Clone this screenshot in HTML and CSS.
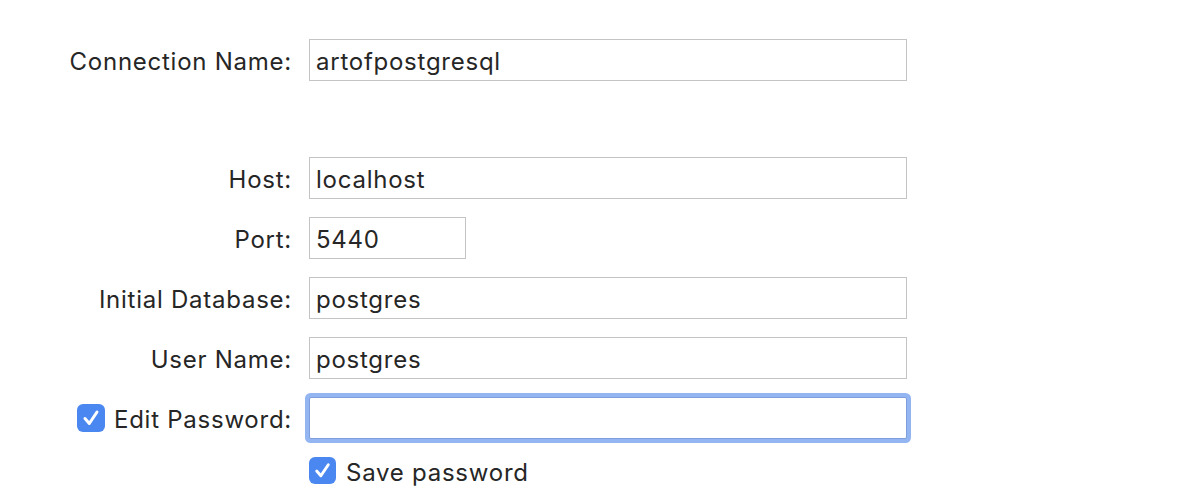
FILE: index.html
```html
<!DOCTYPE html>
<html>
<head>
<meta charset="utf-8">
<link rel="stylesheet" href="styles.css">
</head>
<body>
<div class="form">
  <div class="label">Connection Name:</div>
  <div class="field"><div class="input">artofpostgresql</div></div>
  <div class="spacer"></div>
  <div class="label">Host:</div>
  <div class="field"><div class="input">localhost</div></div>
  <div class="label">Port:</div>
  <div class="field"><div class="input port">5440</div></div>
  <div class="label">Initial Database:</div>
  <div class="field"><div class="input">postgres</div></div>
  <div class="label">User Name:</div>
  <div class="field"><div class="input">postgres</div></div>
  <div class="label check-label">
    <span class="checkbox"><svg viewBox="0 0 28 28" width="28" height="28"><path d="M8 14.5 L12.3 19.5 L20 8" fill="none" stroke="#fff" stroke-width="3" stroke-linecap="round" stroke-linejoin="round"/></svg></span>
    <span>Edit Password:</span>
  </div>
  <div class="field"><div class="input focused"></div></div>
  <div class="empty"></div>
  <div class="save">
    <span class="checkbox small"><svg viewBox="0 0 28 28" width="27" height="27"><path d="M8 14.5 L12.3 19.5 L20 8" fill="none" stroke="#fff" stroke-width="3" stroke-linecap="round" stroke-linejoin="round"/></svg></span>
    <span>Save password</span>
  </div>
</div>
</body>
</html>
```
FILE: styles.css
```css
html, body {
  margin: 0;
  padding: 0;
  background: #ffffff;
}
body {
  font-family: Inter, "Liberation Sans", sans-serif;
  font-size: 24px;
  letter-spacing: 0.75px;
  color: #262626;
}
.form {
  display: grid;
  grid-template-columns: 291px 598px;
  grid-template-rows: 42px 40px;
  grid-auto-rows: 42px;
  column-gap: 18px;
  row-gap: 18px;
  padding-top: 39px;
}
.label {
  display: flex;
  align-items: center;
  justify-content: flex-end;
  white-space: nowrap;
  padding-top: 3px;
  margin-right: -1px;
}
.spacer {
  grid-column: 1 / 3;
}
.field {
  display: flex;
  align-items: center;
}
.input {
  box-sizing: border-box;
  width: 598px;
  height: 42px;
  border: 1px solid #c4c4c4;
  background: #fff;
  padding: 3px 6px 0;
  display: flex;
  align-items: center;
  line-height: 1;
}
.input.port {
  width: 157px;
}
.input.focused {
  border-color: #7f9fdc;
  box-shadow: 0 0 0 4px #93b5f2;
  border-radius: 2px;
}
.check-label {
  gap: 9px;
  padding-top: 0;
}
.check-label span:last-child {
  padding-top: 3px;
}
.checkbox {
  display: inline-flex;
  width: 28px;
  height: 28px;
  border-radius: 6px;
  background: #4b87f0;
  align-items: center;
  justify-content: center;
}
.checkbox.small {
  width: 27px;
  height: 27px;
}
.save {
  display: flex;
  align-items: center;
  gap: 10px;
  height: 27px;
  align-self: start;
}
.save span:last-child {
  padding-top: 3px;
}
```
